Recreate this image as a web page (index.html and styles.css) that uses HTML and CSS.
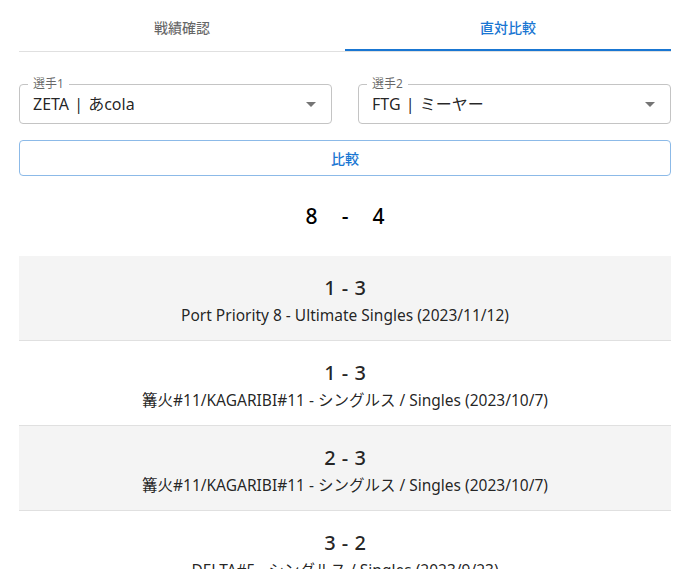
FILE: index.html
```html
<!DOCTYPE html>
<html lang="ja">
<head>
<meta charset="utf-8">
<title>直対比較</title>
<link rel="stylesheet" href="styles.css">
</head>
<body>
<div class="page">
  <div class="tabs">
    <div class="tab">戦績確認</div>
    <div class="tab active">直対比較</div>
  </div>
  <div class="selects">
    <div class="select">
      <span class="label">選手1</span>
      <span class="value">ZETA | あcola</span>
      <svg class="arrow" width="10" height="5" viewBox="0 0 10 5"><path d="M0 0l5 5 5-5z"/></svg>
    </div>
    <div class="select">
      <span class="label">選手2</span>
      <span class="value">FTG | ミーヤー</span>
      <svg class="arrow" width="10" height="5" viewBox="0 0 10 5"><path d="M0 0l5 5 5-5z"/></svg>
    </div>
  </div>
  <button class="compare">比較</button>
  <div class="total"><span>8</span><span>-</span><span>4</span></div>
  <div class="results">
    <div class="row alt">
      <div class="score">1 - 3</div>
      <div class="event">Port Priority 8 - Ultimate Singles (2023/11/12)</div>
    </div>
    <div class="row">
      <div class="score">1 - 3</div>
      <div class="event">篝火#11/KAGARIBI#11 - シングルス / Singles (2023/10/7)</div>
    </div>
    <div class="row alt">
      <div class="score">2 - 3</div>
      <div class="event">篝火#11/KAGARIBI#11 - シングルス / Singles (2023/10/7)</div>
    </div>
    <div class="row">
      <div class="score">3 - 2</div>
      <div class="event">DELTA#5 - シングルス / Singles (2023/9/23)</div>
    </div>
  </div>
</div>
</body>
</html>
```
FILE: styles.css
```css
html, body {
  margin: 0;
  padding: 0;
  background: #fff;
  overflow: hidden;
}
body {
  font-family: "Noto Sans", "Noto Sans CJK JP", sans-serif;
  color: rgba(0, 0, 0, 0.87);
}
.page {
  margin: 0 21px 0 19px;
}
.tabs {
  margin-top: 3px;
  display: grid;
  grid-template-columns: 1fr 1fr;
  border-bottom: 1px solid #e0e0e0;
}
.tab {
  position: relative;
  height: 48px;
  display: flex;
  align-items: center;
  justify-content: center;
  font-size: 14px;
  font-weight: 500;
  color: rgba(0, 0, 0, 0.6);
}
.tab.active {
  color: #1976d2;
}
.tab.active::after {
  content: "";
  position: absolute;
  left: 0;
  right: 0;
  bottom: 0;
  height: 2px;
  background: #1976d2;
}
.selects {
  margin-top: 32px;
  display: grid;
  grid-template-columns: 1fr 1fr;
  gap: 26px;
}
.select {
  position: relative;
  box-sizing: border-box;
  height: 40px;
  border: 1px solid #c4c4c4;
  border-radius: 4px;
  display: flex;
  align-items: center;
  padding: 0 15px 0 13px;
}
.label {
  position: absolute;
  top: -9px;
  left: 8px;
  padding: 0 5px;
  background: #fff;
  font-size: 12px;
  line-height: 16px;
  color: rgba(0, 0, 0, 0.6);
}
.value {
  font-size: 16px;
  line-height: 23px;
  word-spacing: 1px;
}
.arrow {
  margin-left: auto;
  fill: #757575;
}
.compare {
  display: block;
  box-sizing: border-box;
  width: 100%;
  height: 36px;
  margin-top: 16px;
  border: 1px solid #8cbae8;
  border-radius: 4px;
  background: #fff;
  color: #1976d2;
  font-family: inherit;
  font-size: 14px;
  font-weight: 500;
  padding: 0;
}
.total {
  margin: 24px 0;
  height: 32px;
  display: flex;
  justify-content: center;
  gap: 24px;
  font-size: 21px;
  font-weight: 500;
  line-height: 32px;
  color: #000;
}
.row {
  padding: 18px 0 14px;
  text-align: center;
  border-bottom: 1px solid #e0e0e0;
}
.row.alt {
  background: #f4f4f4;
}
.score {
  font-size: 20px;
  font-weight: 500;
  line-height: 28px;
  word-spacing: 1px;
}
.event {
  font-size: 15.5px;
  line-height: 24px;
  padding-top: 1px;
  margin-bottom: -1px;
}
```
